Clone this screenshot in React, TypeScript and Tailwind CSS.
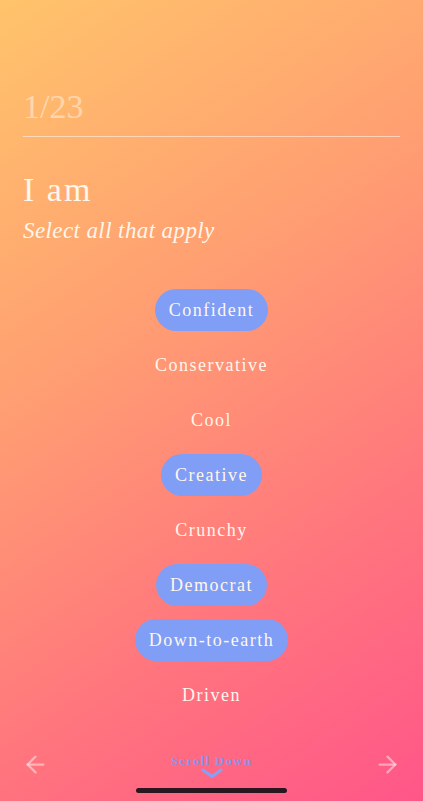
import { ArrowLeft, ArrowRight } from "lucide-react";

const traits = [
  { label: "Confident", selected: true },
  { label: "Conservative", selected: false },
  { label: "Cool", selected: false },
  { label: "Creative", selected: true },
  { label: "Crunchy", selected: false },
  { label: "Democrat", selected: true },
  { label: "Down-to-earth", selected: true },
  { label: "Driven", selected: false },
];

export default function App() {
  return (
    <main
      className="relative flex h-[801px] w-[423px] flex-col overflow-hidden bg-[linear-gradient(146deg,#ffc46b_0%,#ff9e72_38%,#ff747e_72%,#ff5689_100%)] text-[#fff6ec]"
      style={{ fontFamily: '"Liberation Serif", "Times New Roman", serif' }}
    >
      <div className="px-[23px] pt-[86px]">
        <p className="text-[34px] leading-[42px] text-white/45">1/23</p>
        <div className="mt-[8px] h-px w-full bg-white/50" />
        <h1 className="mt-[32px] text-[34px] leading-[42px] tracking-[2px]">I am</h1>
        <p className="mt-[5px] text-[23px] italic leading-[30px] tracking-[0.4px]">Select all that apply</p>
      </div>

      <ul className="mt-[36px] flex flex-col items-center">
        {traits.map((trait) => (
          <li key={trait.label} className="flex h-[55px] items-center justify-center">
            <span
              className={`rounded-full px-[14px] text-[18px] leading-[42px] tracking-[1.5px] ${
                trait.selected ? "bg-[#809ef5]" : ""
              }`}
            >
              {trait.label}
            </span>
          </li>
        ))}
      </ul>

      <div className="mt-auto flex items-start justify-between px-[22px] pb-[22px]">
        <ArrowLeft className="mt-[2px] text-white/45" size={27} strokeWidth={2} />
        <div className="mt-[4px] flex flex-col items-center">
          <span className="text-[13px] font-bold leading-[16px] tracking-[1.2px] text-[#8f92e6]">Scroll Down</span>
          <svg className="-mt-[1px]" width="24" height="11" viewBox="0 0 24 11" fill="none">
            <path d="M3 2l9 6.5 9-6.5" stroke="#88a0f6" strokeWidth="3" strokeLinecap="round" strokeLinejoin="round" />
          </svg>
        </div>
        <ArrowRight className="mt-[2px] text-white/45" size={27} strokeWidth={2} />
      </div>

      <div className="absolute bottom-[8px] left-[136px] h-[5px] w-[151px] rounded-full bg-[#2b1620]" />
    </main>
  );
}
